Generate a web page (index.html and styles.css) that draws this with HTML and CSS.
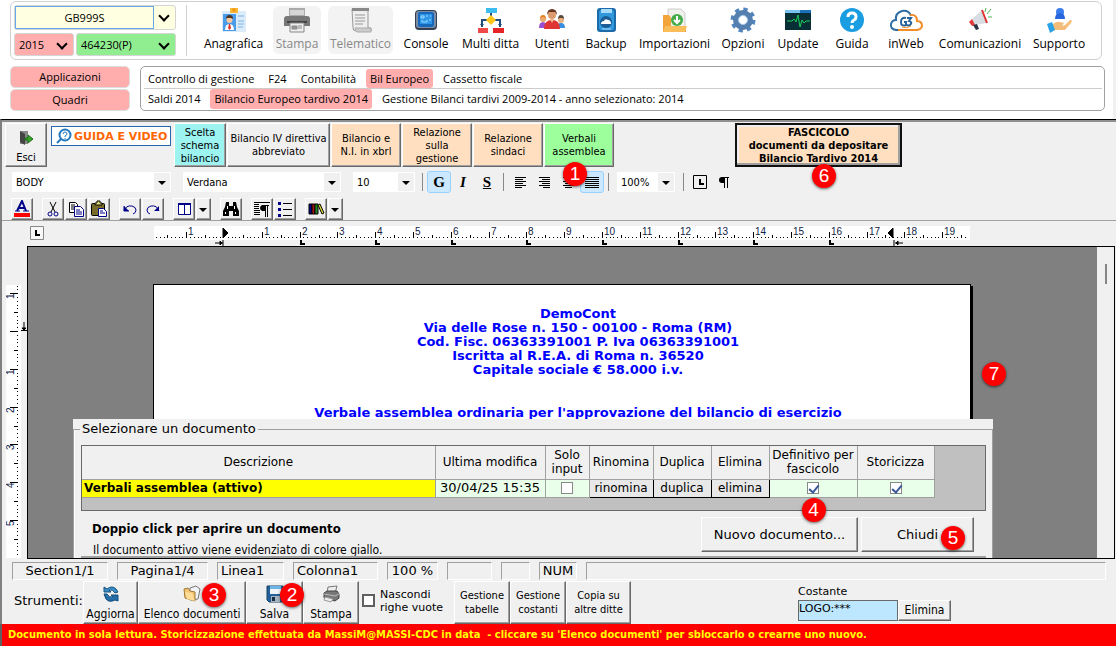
FILE: index.html
```
<!DOCTYPE html>
<html lang="it">
<head>
  <meta charset="UTF-8" />
  <title>Verbali assemblea</title>
  <link rel="stylesheet" href="styles.css">
</head>
<body>

<header class="testata">
  <div class="barra">
    <div class="selettori">
      <span class="combo giallo"><select aria-label="Ditta"><option>GB999S</option></select></span>
      <span class="combo rosa"><select aria-label="Anno"><option>2015</option></select></span>
      <span class="combo verde"><select aria-label="Codice"><option>464230(P)</option></select></span>
    </div>
    <nav class="menu">
      <button type="button" class="w65">
        <svg width="26" height="26" viewBox="0 0 26 26"><rect x="1" y="4" width="24" height="21" rx="1" fill="#dcebfa"/><rect x="2" y="7" width="13" height="17" fill="#4a9be8"/><path d="M9 1h8v5H9z" fill="#f6b93b"/><circle cx="13" cy="3" r="2" fill="#f39c12"/><circle cx="8.500" cy="13" r="3" fill="#f4c7a1"/><path d="M5 12q0-4 3.500-4T12 12l-2-1H6z" fill="#4b3628"/><path d="M4 23q0-6 4.500-6t4.500 6z" fill="#fff"/><path d="M8 17h1l1 4-1.500 2L7 21z" fill="#d33"/><path d="M17 9h6M17 14h6M17 17h6M17 20h5" stroke="#7ab3e8"/></svg>
        <span>Anagrafica</span>
      </button>
      <button type="button" class="w48" disabled>
        <svg width="28" height="26" viewBox="0 0 28 26"><path d="M6 1h16v9H6z" fill="#aaa"/><path d="M7 3h14v5H7z" fill="#d5d5d5"/><path d="M4 9h20q3 0 3 3v7H1v-7q0-3 3-3z" fill="#777"/><path d="M4 14h20v2H4z" fill="#444"/><path d="M7 16h14v9H7z" fill="#eee" stroke="#888"/><path d="M9 19h5v3H9zM15 19h4M15 21h4" stroke="#888" fill="#999"/></svg>
        <span>Stampa</span>
      </button>
      <button type="button" class="w65" disabled>
        <svg width="24" height="26" viewBox="0 0 24 26"><path d="M3 2h16v19h3v3H7q-3 0-3-3z" fill="#eee" stroke="#999"/><path d="M3 1h17v3H3z" fill="#888"/><path d="M6 8h10M6 11h10M6 14h10M6 17h8" stroke="#999"/><path d="M6 21h16v4H8q-2-1-2-4z" fill="#ccc" stroke="#aaa"/></svg>
        <span>Telematico</span>
      </button>
      <button type="button" class="w52">
        <svg width="24" height="26" viewBox="0 0 24 26"><rect x="1" y="3" width="22" height="20" rx="4" fill="#333f50"/><rect x="2" y="4" width="20" height="17" rx="3" fill="#7d8da3"/><rect x="4" y="5" width="16" height="15" rx="2" fill="#1769bd"/><rect x="6" y="7" width="12" height="10" fill="#2d96e8"/><path d="M7 9h3v2H7zM12 9h2M16 9h1M8 13v2h5v-2M15 13h2" stroke="#9cdaff" fill="none"/></svg>
        <span>Console</span>
      </button>
      <button type="button" class="w63">
        <svg width="26" height="26" viewBox="0 0 26 26"><path d="M13 5v8M4 20v-7h18v7" stroke="#234d7a" stroke-width="2" fill="none"/><rect x="8" y="1" width="11" height="5" fill="#3dbcf0"/><path d="M13 8l5 5-5 5-5-5z" fill="#ffc619"/><path d="M4 20l-2-3h4zM22 20l-2-3h4z" fill="#234d7a"/><rect x="0" y="21" width="10" height="5" fill="#ef4a4a"/><rect x="15" y="21" width="11" height="5" fill="#e52525"/></svg>
        <span>Multi ditta</span>
      </button>
      <button type="button" class="w46">
        <svg width="26" height="26" viewBox="0 0 26 26"><circle cx="4" cy="12" r="3" fill="#e9ab6d"/><path d="M1 12q0-4 3-4t3 4l-2-2H3z" fill="#e67e22"/><path d="M0 21q0-6 4-6t4 6z" fill="#9b4fd0"/><circle cx="22" cy="13" r="3" fill="#eab07d"/><path d="M19 12q0-4 3-4t3 4l-2-1h-2z" fill="#59483c"/><path d="M18 21q0-5 4-5t4 5z" fill="#3a8ee0"/><circle cx="13" cy="8" r="4" fill="#dc9a6d"/><path d="M8 8q0-6 5-6t5 6l-2-3h-6z" fill="#6a3521"/><path d="M5 22q0-9 8-9t8 9z" fill="#df3535"/><path d="M11 12h4l-2 4z" fill="#f3bd94"/></svg>
        <span>Utenti</span>
      </button>
      <button type="button" class="w48">
        <svg width="22" height="26" viewBox="0 0 22 26"><rect x="2" y="1" width="19" height="24" rx="3" fill="#1c6aaa"/><rect x="4" y="3" width="15" height="20" rx="2" fill="#3298dc"/><path d="M6 2h11v4H6z" fill="#a8dafa"/><circle cx="11" cy="15" r="6" fill="#1b5d94"/><path d="M6 17q0-3 3-3 1-3 4-1 3 0 3 4z" fill="#fff"/><path d="M7 22h9" stroke="#aee0ff"/></svg>
        <span>Backup</span>
      </button>
      <button type="button" class="w75">
        <svg width="26" height="26" viewBox="0 0 26 26"><path d="M6 2h13l4 4v16H6z" fill="#f0f0ed" stroke="#ccc"/><path d="M1 8h6l2 3v10h15v4H1z" fill="#f3a43b"/><path d="M1 25l2-6h22l-2 6z" fill="#f9bd5a"/><circle cx="15" cy="13" r="6" fill="#45ac49"/><path d="M15 9v6M12 13l3 3 3-3" stroke="#fff" stroke-width="2" fill="none"/></svg>
        <span>Importazioni</span>
      </button>
      <button type="button" class="w48">
        <svg width="26" height="26" viewBox="0 0 26 26"><circle cx="13" cy="13" r="10.500" fill="none" stroke="#5385bd" stroke-width="4" stroke-dasharray="4.200 4.047"/><circle cx="13" cy="13" r="7" fill="none" stroke="#557fae" stroke-width="6"/><circle cx="13" cy="13" r="4.500" fill="#fff" stroke="#a9c9ec"/></svg>
        <span>Opzioni</span>
      </button>
      <button type="button" class="w48">
        <svg width="26" height="26" viewBox="0 0 26 26"><rect x="0" y="3" width="26" height="20" fill="#082f35"/><path d="M0 3h26v3H0z" fill="#1c70ba"/><path d="M0 3h15v3H0z" fill="#77c4f0"/><path d="M2 14h5l2-2 2 3 2-7 2 12 2-7 2 3 2-2h4" stroke="#19ce57" fill="none"/></svg>
        <span>Update</span>
      </button>
      <button type="button" class="w46">
        <svg width="26" height="26" viewBox="0 0 26 26"><circle cx="13" cy="13" r="12" fill="#1b9de2"/><path d="M9 10q0-4 4-4t4 4q0 2-2 3t-2 3" fill="none" stroke="#fff" stroke-width="3"/><circle cx="13" cy="20" r="2" fill="#fff"/></svg>
        <span>Guida</span>
      </button>
      <button type="button" class="w48">
        <svg width="34" height="26" viewBox="0 0 34 26"><path d="M10 23H7q-6-1-5-6 1-4 5-4-1-7 6-9 7-1 9 5" fill="none" stroke="#2f6ea4" stroke-width="2"/><path d="M21 8q7-1 7 6 5 0 5 5-1 4-6 4H9" fill="none" stroke="#f28c28" stroke-width="2"/><path d="M17 11q-5-1-5 4t5 3v-3h-2M18 11h4l-2 3q4 1 1 4-1 1-3 0" fill="none" stroke="#28639a" stroke-width="2"/><path d="M13 20q5 2 9-1" stroke="#f28c28" fill="none"/></svg>
        <span>inWeb</span>
      </button>
      <button type="button" class="w88">
        <svg width="26" height="26" viewBox="0 0 26 26"><path d="M4 13L15 3l5 13-12 2z" fill="#d7dde2"/><path d="M15 3l5 13" stroke="#de3434" stroke-width="2"/><path d="M5 12l3 6-3 1-3-4z" fill="#e63939"/><path d="M6 18l4-1 2 5-3 1z" fill="#2b3340"/><path d="M18 5l1-4M20 7l4-5M21 10h4" stroke="#46b950"/></svg>
        <span>Comunicazioni</span>
      </button>
      <button type="button" class="w58">
        <svg width="26" height="26" viewBox="0 0 26 26"><circle cx="14" cy="5" r="4" fill="#3a7dec"/><path d="M9 12q0-6 5-6t5 6z" fill="#2866de"/><path d="M7 17q4-3 7-2l4 1-2 3 3-1 5-5q3 0 1 3l-6 7H7z" fill="#f5bd7a"/><path d="M1 17l5-2 3 8-5 3z" fill="#2ca3e8"/></svg>
        <span>Supporto</span>
      </button>
    </nav>
  </div>

  <div class="percorso">
    <div class="sezioni">
      <button type="button">Applicazioni</button>
      <button type="button">Quadri</button>
    </div>
    <div class="schede">
      <nav>
        <a href="#">Controllo di gestione</a><a href="#">F24</a><a href="#">Contabilità</a><a href="#" class="attiva">Bil Europeo</a><a href="#">Cassetto fiscale</a>
      </nav>
      <nav>
        <a href="#">Saldi 2014</a><a href="#" class="attiva">Bilancio Europeo tardivo 2014</a><a href="#">Gestione Bilanci tardivi 2009-2014 - anno selezionato: 2014</a>
      </nav>
    </div>
  </div>
</header>

<main class="lavoro">
  <div class="comandi">
    <button type="button" class="rilievo esci">
      <svg width="16" height="16" viewBox="0 0 16 16"><path d="M2 1h8v13H2z" fill="#888"/><path d="M2 1l5 3v11l-5-3z" fill="#444"/><path d="M7 8h3V5l5 4-5 4v-3H7z" fill="#37a526" stroke="#1c6d18"/></svg>
      <span>Esci</span>
    </button>
    <a href="#" class="guida">
      <svg width="16" height="16" viewBox="0 0 16 16"><circle cx="9" cy="7" r="5.500" fill="#fff" stroke="#2478bf" stroke-width="2"/><path d="M5 11l-4 4" stroke="#2478bf" stroke-width="2"/><path d="M7 6q0-2 2-2t2 2q0 1-2 2v1M9 10v1" fill="none" stroke="#2478bf"/></svg>
      GUIDA E VIDEO
    </a>
    <div class="fasi">
      <button type="button" class="rilievo azzurro">Scelta schema bilancio</button>
      <button type="button" class="rilievo largo">Bilancio IV direttiva<br>abbreviato</button>
      <button type="button" class="rilievo pesca">Bilancio e<br>N.I. in xbrl</button>
      <button type="button" class="rilievo pesca">Relazione<br>sulla<br>gestione</button>
      <button type="button" class="rilievo pesca">Relazione<br>sindaci</button>
      <button type="button" class="rilievo prato">Verbali<br>assemblea<span class="numero n1">1</span></button>
    </div>
    <button type="button" class="rilievo fascicolo">FASCICOLO<br>documenti da depositare<br>Bilancio Tardivo 2014<span class="numero n6">6</span></button>
  </div>

  <div class="formato">
    <span class="scelta stile"><select aria-label="Stile"><option>BODY</option></select></span>
    <span class="scelta carattere"><select aria-label="Carattere"><option>Verdana</option></select></span>
    <span class="scelta corpo"><select aria-label="Dimensione"><option>10</option></select></span>
    <i class="divisore"></i>
    <button type="button" class="piatto premuto"><b>G</b></button>
    <button type="button" class="piatto"><b><em>I</em></b></button>
    <button type="button" class="piatto"><b><u>S</u></b></button>
    <i class="divisore"></i>
    <button type="button" class="piatto" aria-label="Sinistra"><svg width="13" height="13"><path d="M1 1.500h11M1 3.500h8M1 5.500h11M1 7.500h8M1 9.500h11M1 11.500h7" stroke="#000"/></svg></button>
    <button type="button" class="piatto" aria-label="Destra"><svg width="13" height="13"><path d="M1 1.500h11M4 3.500h8M1 5.500h11M4 7.500h8M1 9.500h11M5 11.500h7" stroke="#000"/></svg></button>
    <button type="button" class="piatto" aria-label="Centro"><svg width="13" height="13"><path d="M1 1.500h11M3 3.500h7M1 5.500h11M3 7.500h7M1 9.500h11M3 11.500h7" stroke="#000"/></svg></button>
    <button type="button" class="piatto premuto" aria-label="Giustificato"><svg width="14" height="13"><path d="M0 1.500h14M0 3.500h14M0 5.500h14M0 7.500h14M0 9.500h14M0 11.500h14" stroke="#000"/></svg></button>
    <i class="divisore"></i>
    <span class="scelta zoom"><select aria-label="Zoom"><option>100%</option></select></span>
    <i class="divisore"></i>
    <button type="button" class="piatto" aria-label="Tabulazione"><svg width="14" height="14"><path d="M.5.5h13v13H.5z" fill="none" stroke="#000"/><path d="M7 4v5h4" fill="none" stroke="#000" stroke-width="2"/></svg></button>
    <button type="button" class="piatto" aria-label="Paragrafo"><svg width="12" height="13"><path d="M11 1.500H4M6.500 1v11M9.500 1v11" stroke="#000" fill="none"/><path d="M6 1H4Q1 1 1 4t3 3h2z"/></svg></button>
  </div>

  <div class="strumenti">
    <button type="button" class="rilievo" aria-label="Colore"><svg width="18" height="18"><path d="M1 13h16v4H1z" fill="red"/><path d="M4 11L9 1l4 10M6 8h6" fill="none" stroke="#008" stroke-width="2"/><path d="M2 11h5M10 11h6" stroke="#008"/></svg></button>
    <span class="gruppo">
      <button type="button" class="rilievo" aria-label="Taglia"><svg width="18" height="18"><path d="M6 2l5 10M12 2L7 12" stroke="#000" fill="none"/><circle cx="6" cy="14" r="2" fill="none" stroke="#008"/><circle cx="12" cy="14" r="2" fill="none" stroke="#008"/></svg></button>
      <button type="button" class="rilievo" aria-label="Copia"><svg width="18" height="18"><path d="M2.500 2.500h6l2 2v8h-8z" fill="#fff" stroke="#000"/><path d="M4 5h4M4 7h5M4 9h5" stroke="#000"/><path d="M7.500 6.500h6l3 3v7h-9z" fill="#fff" stroke="#008"/><path d="M9 10h4M9 12h6M9 14h6" stroke="#008"/></svg></button>
      <button type="button" class="rilievo" aria-label="Incolla"><svg width="18" height="18"><rect x="1.500" y="3.500" width="13" height="12" rx="1" fill="#776b2a" stroke="#000"/><path d="M5 5V3h2V1h3v2h2v2z" fill="#eee47a" stroke="#000"/><path d="M8.500 8.500h5l3 3v5h-8z" fill="#fff" stroke="#008"/><path d="M10 11h3M10 13h5" stroke="#008"/></svg></button>
    </span>
    <span class="gruppo">
      <button type="button" class="rilievo" aria-label="Annulla"><svg width="18" height="18"><path d="M3 6v5h5M3 11q2-6 8-5 4 1 4 4 0 3-3 4" fill="none" stroke="#008"/><path d="M3 6v5h5z" fill="#008"/></svg></button>
      <button type="button" class="rilievo" aria-label="Ripeti"><svg width="18" height="18"><path d="M15 11q-2-6-8-5-4 1-4 4 0 3 3 4" fill="none" stroke="#008"/><path d="M15 6v5h-5z" fill="#008"/></svg></button>
    </span>
    <span class="gruppo">
      <button type="button" class="rilievo" aria-label="Tabella"><svg width="18" height="18"><path d="M3.500 3.500h12v11h-12zM9.500 4v10" fill="#fff" stroke="#008"/><path d="M3 4h13" stroke="#008" stroke-width="2"/></svg></button>
      <button type="button" class="rilievo freccia" aria-label="Altre tabelle"></button>
    </span>
    <button type="button" class="rilievo" aria-label="Trova"><svg width="18" height="18"><path d="M4 2h3v4h4V2h3l1 5 2 4v5h-6v-5H7v5H1v-5l2-4z"/><path d="M5.500 6v3M3.500 12v2M13.500 12v2M12.500 6v3" stroke="#fff"/></svg></button>
    <span class="gruppo">
      <button type="button" class="rilievo" aria-label="Formato paragrafo"><svg width="18" height="18"><path d="M1 2.500h16M1 4.500h5M1 6.500h5M1 8.500h5M1 10.500h6M1 12.500h6M1 14.500h6" stroke="#000"/><path d="M16 5.500H9M12.500 5v12M14.500 5v12" stroke="#000"/><path d="M12 5H9Q7 6 7 8t2 3h3z"/></svg></button>
      <button type="button" class="rilievo" aria-label="Elenco puntato"><svg width="18" height="18"><path d="M2 2h3v3H2zM2 8h3v3H2zM2 14h3v3H2z" fill="#008"/><path d="M7 3.500h9M7 9.500h9M7 15.500h9" stroke="#000"/></svg></button>
    </span>
    <span class="gruppo">
      <button type="button" class="rilievo" aria-label="Libreria"><svg width="18" height="18"><path d="M2 4h3v10H2z" fill="#008" stroke="#000"/><path d="M5 4h3v10H5z" fill="#a11" stroke="#000"/><path d="M8 4h3v10H8z" fill="#282" stroke="#000"/><path d="M11 5l2-1 4 9-2 1z" fill="#dd3" stroke="#000"/></svg></button>
      <button type="button" class="rilievo freccia" aria-label="Altre librerie"></button>
    </span>
  </div>

  <div class="righello">
    <svg class="tab" width="14" height="14"><path d="M.5.5h13v13H.5z" fill="#f8f8f8" stroke="#888"/><path d="M6 4v5h4" fill="none" stroke="#000" stroke-width="2"/></svg>
    <svg id="orizzontale" width="816" height="20"></svg>
  </div>

  <div class="editor">
    <div class="laterale"><svg id="verticale" width="21" height="273"></svg></div>
    <div class="vista">
      <article class="foglio">
        <p>DemoCont<br>Via delle Rose n. 150 - 00100 - Roma (RM)<br>Cod. Fisc. 06363391001 P. Iva 06363391001<br>Iscritta al R.E.A. di Roma n. 36520<br>Capitale sociale € 58.000 i.v.</p>
        <p>Verbale assemblea ordinaria per l'approvazione del bilancio di esercizio</p>
      </article>
      <span class="numero n7">7</span>

      <section class="finestra">
        <fieldset>
          <legend>Selezionare un documento</legend>
          <div class="griglia">
            <table>
              <colgroup><col class="c353"><col class="c110"><col class="c44"><col class="c64"><col class="c58"><col class="c58"><col class="c88"><col class="c77"></colgroup>
              <thead>
                <tr><th>Descrizione</th><th>Ultima modifica</th><th>Solo<br>input</th><th>Rinomina</th><th>Duplica</th><th>Elimina</th><th>Definitivo per<br>fascicolo</th><th>Storicizza</th></tr>
              </thead>
              <tbody>
                <tr>
                  <td class="nome">Verbali assemblea (attivo)</td>
                  <td class="data">30/04/25 15:35</td>
                  <td><input type="checkbox" aria-label="Solo input"></td>
                  <td class="azione"><button type="button">rinomina</button></td>
                  <td class="azione"><button type="button">duplica</button></td>
                  <td class="azione"><button type="button">elimina</button></td>
                  <td><input type="checkbox" aria-label="Definitivo per fascicolo" checked><span class="numero n4">4</span></td>
                  <td><input type="checkbox" aria-label="Storicizza" checked></td>
                </tr>
              </tbody>
            </table>
          </div>
          <div class="piede">
            <div class="aiuto">
              <strong>Doppio click per aprire un documento</strong>
              <span>Il documento attivo viene evidenziato di colore giallo.</span>
            </div>
            <button type="button" class="rilievo nuovo">Nuovo documento...</button>
            <button type="button" class="rilievo chiudi">Chiudi<span class="numero n5">5</span></button>
          </div>
          <div class="riquadro"></div>
        </fieldset>
      </section>
    </div>
    <div class="scorrimento"><i></i></div>
  </div>

  <div class="stato">
    <span class="s95">Section1/1</span>
    <span class="s90">Pagina1/4</span>
    <span class="s66 inizio">Linea1</span>
    <span class="s84 inizio">Colonna1</span>
    <span class="s50">100 %</span>
    <span class="s44"></span>
    <span class="s28"></span>
    <span class="s38">NUM</span>
    <span class="resto"></span>
  </div>

  <div class="inferiore">
    <span class="titolo">Strumenti:</span>
    <button type="button" class="rilievo icona aggiorna">
      <svg width="18" height="18" viewBox="0 0 18 18"><path d="M2 2l3 2q5-4 9 0l2 3-3 1q-2-4-6-3l2 2H2z" fill="#368fc8" stroke="#124e7d"/><path d="M16 16l-3-1q-6 3-9-1L2 9h3q2 4 6 3l-2-2h7z" fill="#236da8" stroke="#124e7d"/></svg>
      <span>Aggiorna</span>
    </button>
    <button type="button" class="rilievo icona elenco">
      <svg width="18" height="18" viewBox="0 0 18 18"><path d="M7 3l6-2 4 3-2 10-8 1z" fill="#f1f3f6" stroke="#777"/><path d="M1 4l4-1 2 3 5 1v9L2 13z" fill="#f2c574" stroke="#a17733"/><path d="M2 7l7 1 3 8-8-2z" fill="#ffdd98"/></svg>
      <span>Elenco documenti</span><span class="numero n3">3</span>
    </button>
    <button type="button" class="rilievo icona salva">
      <svg width="18" height="18" viewBox="0 0 18 18"><path d="M1 1h16v16H3l-2-2z" fill="#235f99" stroke="#154268"/><path d="M4 1h11v8H4z" fill="#eff3f7"/><path d="M4 1h11v3H4z" fill="#6bb4e5"/><path d="M5 11h9v6H5z" fill="#a6b3bf"/><path d="M6 12h3v4H6z" fill="#152d45"/></svg>
      <span>Salva</span><span class="numero n2">2</span>
    </button>
    <button type="button" class="rilievo icona stampa">
      <svg width="18" height="18" viewBox="0 0 18 18"><path d="M6 2l9-1-2 7H5z" fill="#eee" stroke="#777"/><path d="M2 8l3-2h10l2 3v4l-4 3-11-3z" fill="#777" stroke="#444"/><path d="M2 9l11 2 4-2" stroke="#bbb" fill="none"/><path d="M3 12l8 2-2 3-7-2z" fill="#eee" stroke="#999"/></svg>
      <span>Stampa</span>
    </button>
    <label class="nascondi"><input type="checkbox"><span>Nascondi<br>righe vuote</span></label>
    <button type="button" class="rilievo testo">Gestione<br>tabelle</button>
    <button type="button" class="rilievo testo">Gestione<br>costanti</button>
    <button type="button" class="rilievo testo copia">Copia su<br>altre ditte</button>
    <div class="costante">
      <label for="costante">Costante</label>
      <div><input type="text" id="costante" value="LOGO:***"><button type="button" class="rilievo">Elimina</button></div>
    </div>
  </div>
</main>

<footer class="avviso">Documento in sola lettura. Storicizzazione effettuata da MassiM@MASSI-CDC in data&nbsp; - cliccare su 'Elenco documenti' per sbloccarlo o crearne uno nuovo.</footer>

<script>
const CM = 37.8;

// righello orizzontale: zero a 70px dal bordo del foglio
function disegnaOrizzontale() {
  let s = '<rect width="816" height="14" fill="#fff"/>';
  for (let i = -18; i < 197; i++) {
    const x = Math.round(70 + i * CM / 10);
    const h = i % 10 === 0 ? 6 : i % 5 === 0 ? 3 : 1;
    if (i === 0) continue;
    s += `<path d="M${x}.5 ${12 - h}v${h}" stroke="#000"/>`;
    if (i % 10 === 0) s += `<text x="${x + 2}" y="9">${Math.abs(i / 10)}</text>`;
  }
  for (let cm = 2; cm <= 16; cm += 2) {
    const x = Math.round(71 + cm * CM);
    s += `<path d="M${x} 14v4h4" fill="none" stroke="#000" stroke-width="2"/>`;
  }
  s += '<path d="M69 2l5 5-5 5zM61 17h8M69 14v6M66 15l2 2-2 2z" stroke="#000"/>';
  s += '<path d="M739 2l-5 5 5 5zM741 17h8M740 14v6M744 15l-2 2 2 2z" stroke="#000"/>';
  document.getElementById("orizzontale").innerHTML = s;
}

function disegnaVerticale() {
  let s = '<rect width="15" height="273" fill="#fff"/>';
  for (let i = -12; i < 60; i++) {
    const y = Math.round(46 + i * CM / 10);
    const w = i % 10 === 0 ? 8 : i % 5 === 0 ? 4 : 1;
    s += `<path d="M${12 - w} ${y}.5h${w}" stroke="#000"/>`;
    if (i % 10 === 0 && i !== 0) s += `<text transform="translate(8 ${y + 6}) rotate(-90)">${Math.abs(i / 10)}</text>`;
  }
  s += '<path d="M18 37v8M15 45.5h6M16 43l2 2 2-2z" stroke="#000"/>';
  document.getElementById("verticale").innerHTML = s;
}

disegnaOrizzontale();
disegnaVerticale();
</script>

</body>
</html>
```

FILE: styles.css
```
* { box-sizing: border-box; }
body {
  margin: 0;
  height: 100vh;
  display: flex;
  flex-direction: column;
  overflow: hidden;
  background: #f0f0f0;
  color: #000;
  font-family: "DejaVu Sans Condensed", "DejaVu Sans", sans-serif;
  font-size: 11px;
}
button, select, input {
  font: inherit;
  color: inherit;
  margin: 0;
  padding: 0;
}
button { border: none; background: none; cursor: pointer; white-space: nowrap; }
svg { display: block; flex: none; }

/* testata */
.testata {
  flex: none;
  background: #fff;
  border-right: 3px solid #f0f0f0;
  padding: 1px 8px 8px 10px;
  font-family: "Open Sans", "Noto Sans", sans-serif;
  font-size: 12px;
}
.barra {
  display: flex;
  height: 59px;
  margin-right: 3px;
  border: 1px solid #d0d0d0;
  border-radius: 6px;
  padding: 3px;
}
.selettori {
  display: grid;
  grid-template-columns: 60px 100px;
  gap: 3px 2px;
  width: 162px;
  font-size: 11px;
}
.combo { position: relative; border: 1px solid #d5d5d5; border-radius: 3px; }
.combo select {
  appearance: none;
  width: 100%;
  height: 100%;
  border: none;
  background: none;
  padding-left: 4px;
}
.combo::after {
  content: "";
  position: absolute;
  right: 7px;
  top: 6px;
  width: 6px;
  height: 6px;
  border: solid #000;
  border-width: 0 2px 2px 0;
  transform: rotate(45deg);
  pointer-events: none;
}
.giallo { grid-column: span 2; background: #ffffe1; padding-right: 21px; }
.combo.giallo select { border: 1px solid #66a7e8; text-align: center; padding: 0; }
.rosa, .sezioni button, .attiva { background: #ffadad; }
.verde { background: #90ee90; }
.menu {
  display: flex;
  gap: 7px;
  margin-left: 10px;
  padding-left: 14px;
  border-left: 1px solid #d0d0d0;
}
.menu button {
  height: 48px;
  margin-top: 1px;
  border-radius: 6px;
  display: flex;
  flex-direction: column;
  align-items: center;
  line-height: 16px;
  gap: 3px;
  padding-top: 1px;
}
.menu button:disabled { background: #f3f3f3; color: #888; }
.menu .w46 { width: 46px; }
.menu .w48 { width: 48px; }
.menu .w52 { width: 52px; }
.menu .w58 { width: 58px; }
.menu .w63 { width: 63px; }
.menu .w65 { width: 65px; }
.menu .w75 { width: 75px; }
.menu .w88 { width: 86px; }

.percorso { display: flex; gap: 10px; margin-top: 6px; font-size: 11px; }
.sezioni { width: 120px; display: flex; flex-direction: column; gap: 1px; }
.sezioni button { flex: 1; border: 1px solid #ddd; border-radius: 5px; line-height: 16px; }
.schede { flex: 1; height: 45px; border: 1px solid #a0a0a0; border-radius: 5px; padding: 2px 2px 2px 3px; }
.schede nav { display: flex; gap: 6px; height: 20px; }
.schede nav:first-child { border-bottom: 1px solid #ccc; }
.schede a {
  color: #000;
  text-decoration: none;
  padding: 0 4px;
  line-height: 19px;
  border-radius: 3px;
}

/* area di lavoro */
.lavoro {
  flex: 1;
  min-height: 0;
  display: flex;
  flex-direction: column;
  border-top: 1px solid #000;
  border-left: 2px solid #808080;
  box-shadow: inset 0 2px #909090;
}
.rilievo {
  position: relative;
  background: #f0f0f0;
  border: 1px solid;
  border-color: #fff #696969 #696969 #fff;
  box-shadow: inset -1px -1px #a0a0a0;
}
.comandi { display: flex; flex: none; height: 48px; padding: 3px 0 1px 3px; line-height: 13px; }
.esci {
  width: 42px;
  display: flex;
  flex-direction: column;
  align-items: center;
  justify-content: space-between;
  padding: 6px 0 2px;
}
.guida {
  display: flex;
  align-items: center;
  gap: 2px;
  width: 120px;
  height: 20px;
  margin: 3px 3px 0 4px;
  padding-left: 4px;
  background: #fff;
  border: 1px solid #2467ad;
  color: #f60;
  font-family: "DejaVu Sans", sans-serif;
  font-weight: bold;
  font-size: 11px;
  text-decoration: none;
  white-space: nowrap;
}
.fasi { display: flex; gap: 1px; }
.fasi button { width: 70px; }
.fasi .azzurro { width: 52px; background: #9cf3f0; white-space: normal; }
.fasi .largo { width: 103px; }
.rilievo.pesca { background: #ffdfbf; }
.rilievo.prato { background: #9cff9c; }
.fascicolo {
  width: 167px;
  margin-left: 121px;
  background: #ffdfbf;
  border: 2px solid #111;
  box-shadow: inset -2px -2px #a0a0a0, inset 2px 2px #eee;
  font-weight: bold;
}
.numero {
  position: absolute;
  width: 24px;
  height: 24px;
  border-radius: 50%;
  background: #f00;
  color: #fff;
  font: 19px/24px "Liberation Sans", Arial, sans-serif;
  text-align: center;
  box-shadow: 0 1px 3px rgba(0, 0, 0, .6);
  z-index: 5;
}
.n1 { left: 18px; top: 38px; }
.n2 { left: 33px; top: 1px; }
.n3 { left: 63px; top: 1px; }
.n4 { left: 32px; top: 18px; }
.n5 { right: 8px; top: 8px; }
.n6 { left: 75px; top: 39px; }
.n7 { left: 954px; top: 115px; }

.formato { display: flex; flex: none; align-items: center; height: 26px; padding: 2px 0 0 10px; }
.scelta { position: relative; height: 20px; background: #fff; }
.scelta select {
  appearance: none;
  width: 100%;
  height: 20px;
  border: none;
  background: none;
  padding-left: 4px;
}
.scelta::after {
  content: "";
  position: absolute;
  right: 1px;
  top: 1px;
  width: 16px;
  height: 18px;
  background: #f0f0f0;
  pointer-events: none;
}
.scelta::before, .freccia::before {
  content: "";
  position: absolute;
  z-index: 1;
  right: 5px;
  top: 9px;
  border: solid transparent;
  border-width: 4px 4px 0;
  border-top-color: #000;
  pointer-events: none;
}
.freccia::before { right: 3px; }
.stile { width: 159px; margin-right: 12px; }
.carattere { width: 158px; margin-right: 12px; }
.corpo { width: 62px; margin-right: 3px; }
.zoom { width: 58px; margin: 0 4px; }
.divisore { width: 1px; height: 18px; margin: 0 4px; background: #888; }
.piatto {
  width: 24px;
  height: 22px;
  border: 1px solid transparent;
  border-radius: 3px;
  display: flex;
  align-items: center;
  justify-content: center;
  font: 15px "Liberation Serif", serif;
}
.premuto { background: #cce8ff; border-color: #99d1ff; }

.strumenti { display: flex; flex: none; gap: 9px; height: 26px; padding: 4px 0 0 9px; }
.strumenti button {
  width: 22px;
  height: 22px;
  display: flex;
  align-items: center;
  justify-content: center;
}
.gruppo { display: flex; gap: 1px; }
.strumenti .freccia { width: 15px; }
.righello {
  flex: none;
  display: flex;
  height: 26px;
  padding: 5px 0 0 28px;
  border-top: 1px solid #a0a0a0;
}
#orizzontale { margin-left: 110px; }
.righello text, .laterale text { font: 10px "Liberation Sans", Arial, sans-serif; fill: #124; }

.editor { flex: 1; min-height: 0; display: flex; margin-right: 1px; }
.laterale { width: 25px; padding: 39px 0 0 4px; overflow: hidden; }
.vista {
  position: relative;
  flex: 1;
  overflow: hidden;
  background: #808080;
  border: 1px solid #000;
  border-right: none;
}
.foglio {
  width: 818px;
  height: 400px;
  margin: 37px 0 0 125px;
  padding: 22px 0 0 32px;
  background: #fff;
  border: 1px solid #000;
  box-shadow: 2px 2px #000;
  color: #00f;
  text-align: center;
  font: bold 13px/14px "DejaVu Sans", sans-serif;
}
.foglio p { margin: 0 0 29px; }
.scorrimento { width: 18px; border: solid #000; border-width: 1px 1px 1px 0; padding: 17px 0 0 8px; }
.scorrimento i { display: block; width: 2px; height: 20px; background: #858585; }

/* finestra di selezione, sopra il foglio */
.finestra {
  position: absolute;
  left: 45px;
  top: 172px;
  width: 920px;
  background: #f0f0f0;
  font-family: "DejaVu Sans", sans-serif;
  font-size: 12px;
  line-height: 14px;
}
.finestra fieldset {
  margin: 0;
  padding: 6px 6px 0 7px;
  border: 1px solid #a0a0a0;
  box-shadow: inset 1px 0 #fff;
  min-width: 0;
}
.finestra legend { padding: 2px; line-height: 16px; font-size: 13px; margin-left: -1px; }
.griglia { height: 66px; background: #c0c0c0; border: 1px solid #696969; }
.griglia table { border-collapse: collapse; table-layout: fixed; width: 852px; }
.c353 { width: 353px; }
.c110 { width: 110px; }
.c44 { width: 44px; }
.c64 { width: 64px; }
.c58 { width: 58px; }
.c88 { width: 88px; }
.c77 { width: 77px; }
.griglia th {
  height: 33px;
  padding: 0;
  background: #f0f0f0;
  border: solid #a0a0a0;
  border-width: 0 1px 1px 0;
  font-weight: normal;
  white-space: nowrap;
}
.griglia td {
  position: relative;
  height: 18px;
  padding: 0;
  background: #eaffea;
  border: solid #a0a0a0;
  border-width: 0 1px 1px 0;
  text-align: center;
  line-height: 16px;
  white-space: nowrap;
}
.griglia .nome { background: #ff0; font-weight: bold; text-align: left; padding-left: 2px; }
.griglia .data { font-size: 13px; }
.griglia .azione { border-color: #000; background: #e8e8e8; }
.azione button { width: 100%; height: 17px; line-height: 16px; display: block; }
.griglia input {
  appearance: none;
  display: block;
  width: 12px;
  height: 12px;
  margin: 0 auto;
  background: #fff;
  border: 1px solid #888;
}
.griglia input:checked::after {
  content: "";
  display: block;
  width: 4px;
  height: 8px;
  margin: 0 0 0 3px;
  border: solid #3d5a99;
  border-width: 0 2px 2px 0;
  transform: rotate(40deg);
}
.piede { display: flex; gap: 3px; height: 45px; padding: 6px 12px 0 11px; }
.aiuto { flex: 1; display: flex; flex-direction: column; gap: 7px; padding-top: 5px; font-family: "DejaVu Sans Condensed", sans-serif; }
.aiuto strong { font-size: 13px; }
.aiuto span { padding-left: 1px; }
.nuovo { width: 157px; height: 35px; font-size: 13px; }
.chiudi { width: 113px; height: 35px; font-size: 13px; }
.riquadro { position: relative; height: 20px; border: 2px solid #a0a0a0; background: #ccc; }

/* barra di stato */
.stato {
  flex: none;
  display: flex;
  gap: 9px;
  height: 22px;
  padding: 3px 10px 1px;
  font-family: "DejaVu Sans", sans-serif;
  font-size: 13px;
}
.stato span {
  border: 1px solid;
  border-color: #a0a0a0 #fff #fff #a0a0a0;
  text-align: center;
  line-height: 16px;
  white-space: nowrap;
}
.stato .inizio { text-align: left; padding-left: 3px; }
.s95 { width: 96px; }
.s90 { width: 91px; }
.s66 { width: 67px; }
.s84 { width: 85px; }
.s50 { width: 51px; }
.s44 { width: 45px; }
.s28 { width: 29px; }
.s38 { width: 38px; }
.resto { flex: 1; }

.inferiore { flex: none; display: flex; height: 43px; font-size: 12px; line-height: 13px; }
.titolo {
  width: 81px;
  padding: 12px 0 0 12px;
  font-family: "DejaVu Sans", sans-serif;
  font-size: 13px;
  line-height: 16px;
}
.icona {
  display: flex;
  flex-direction: column;
  align-items: center;
  justify-content: space-between;
  padding: 3px 0 2px;
}
.aggiorna { width: 55px; }
.elenco { width: 108px; }
.salva { width: 57px; }
.stampa { width: 56px; }
.nascondi { display: flex; width: 95px; gap: 5px; padding: 7px 0 0 3px; font: 11px/13px "DejaVu Sans", sans-serif; white-space: nowrap; }
.nascondi input { appearance: none; width: 13px; height: 13px; margin-top: 6px; background: #fff; border: 2px solid #606060; }
.testo { width: 56px; line-height: 14px; font-size: 11px; }
.copia { width: 65px; }
.costante { margin-left: 167px; padding-top: 4px; font: 11px/13px "DejaVu Sans", sans-serif; }
.costante div { display: flex; align-items: flex-start; margin-top: 2px; }
.costante input {
  width: 100px;
  height: 21px;
  padding: 0 0 5px;
  background: #bde6ff;
  border: 1px solid #696969;
}
.costante button { width: 53px; height: 21px; font-family: "DejaVu Sans Condensed", sans-serif; font-size: 12px; }

.avviso {
  flex: none;
  height: 22px;
  padding-left: 6px;
  border-left: 2px solid #606060;
  background: #f00;
  color: #ff0;
  font-weight: bold;
  line-height: 22px;
  white-space: nowrap;
}
```
